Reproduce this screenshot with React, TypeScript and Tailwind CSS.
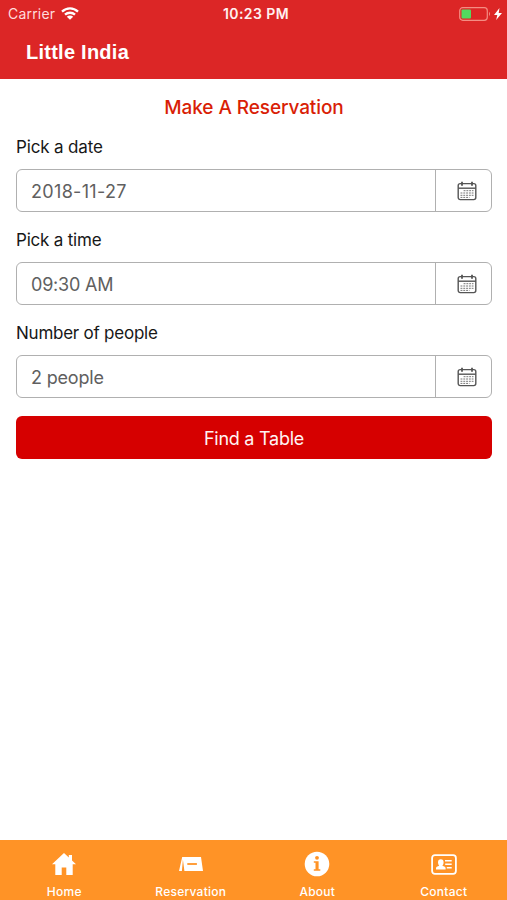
import React from 'react';

function CalendarIcon() {
  return (
    <svg className="h-5 w-5" viewBox="0 0 20 20" fill="none" stroke="#555" strokeWidth="1.4">
      <rect x="1.2" y="2.6" width="17.6" height="16" rx="2" />
      <path d="M1.2 7.2h17.6" strokeWidth="1.4" />
      <path d="M5 0.8v4M15 0.8v4" strokeWidth="1.8" />
      <path d="M6.6 9.7h9.9M3.5 12h13M3.5 14.3h13M3.5 16.4h9" stroke="#777" strokeWidth="1" strokeDasharray="1.9 0.9" />
    </svg>
  );
}

function Field({ label, value, labelTracking, valueTracking }: { label: string; value: string; labelTracking: string; valueTracking: string }) {
  return (
    <div className="mb-[17px]">
      <div className={`mb-[10px] h-[23px] text-[17px] leading-[23px] text-[#171717] ${labelTracking}`}>{label}</div>
      <div className="flex h-[43px] rounded-[6px] border border-[#b0b0b0] bg-white">
        <div className={`flex-1 pl-[14px] text-[18px] leading-[43px] text-[#606060] ${valueTracking}`}>{value}</div>
        <div className="flex w-[56px] items-center justify-center border-l border-[#b0b0b0] pl-[7px]">
          <CalendarIcon />
        </div>
      </div>
    </div>
  );
}

function Tab({ label, children }: { label: string; children: React.ReactNode }) {
  return (
    <div className="flex flex-1 flex-col items-center pt-[10px] text-white">
      <div className="flex h-7 items-center justify-center">{children}</div>
      <div className="mt-[6px] text-[12px] font-medium leading-[16px] tracking-[0.25px]">{label}</div>
    </div>
  );
}

export default function App() {
  return (
    <div className="flex h-[900px] w-[507px] flex-col overflow-hidden bg-white font-['Inter',sans-serif]">
      <header className="h-[79px] shrink-0 bg-[#dc2626] text-white">
        <div className="grid h-[27px] grid-cols-3 items-center pl-[8px] pr-[5px]">
          <div className="flex items-center gap-[6px] text-[14px] tracking-[0.2px] text-[#ffdcdc]">
            <span>Carrier</span>
            <svg width="18" height="13" viewBox="0 0 18 13" fill="none" stroke="white" strokeWidth="2.3">
              <path d="M1 4.6C5.6 .3 12.4 .3 17 4.6M4 7.7c2.8-2.6 7.2-2.6 10 0" />
              <path d="M9 12.8 5.8 9.7c1.9-1.6 4.5-1.6 6.4 0z" fill="white" stroke="none" />
            </svg>
          </div>
          <div className="pl-[2px] text-center text-[14px] font-semibold tracking-[0.4px] text-[#fff0f0]">10:23 PM</div>
          <div className="flex items-center justify-end gap-[3px]">
            <svg width="32" height="14" viewBox="0 0 32 14" fill="none">
              <rect x=".7" y=".7" width="27.6" height="12.6" rx="3" stroke="#f48d83" strokeWidth="1.2" />
              <rect x="2.5" y="2.5" width="9.5" height="9" rx="1" fill="#52d95f" />
              <path d="M30 4.8q2 2.2 0 4.4z" fill="#f48d83" />
            </svg>
            <svg width="8" height="12" viewBox="0 0 8 12" fill="white"><path d="M5.5 0 0 7h3.3L2.2 12 8 4.9H4.7z" /></svg>
          </div>
        </div>
        <h1 className="pl-[26px] pt-[11px] font-['Liberation_Sans',Arial,sans-serif] text-[20px] font-bold leading-[29px] tracking-[0.25px]">Little India</h1>
      </header>
      <main className="flex-1 pl-4 pr-[15px] pt-4">
        <h2 className="mb-4 text-center text-[19px] font-medium leading-[25px] tracking-[-0.1px] text-[#d91e06]">Make A Reservation</h2>
        <Field label="Pick a date" value="2018-11-27" labelTracking="tracking-[-0.15px]" valueTracking="tracking-[0.33px]" />
        <Field label="Pick a time" value="09:30 AM" labelTracking="tracking-[-0.2px]" valueTracking="tracking-[-0.2px]" />
        <Field label="Number of people" value="2 people" labelTracking="tracking-[-0.24px]" valueTracking="tracking-[-0.18px]" />
        <button className="mt-[18px] block h-[43px] w-full rounded-[6px] bg-[#d60000] pt-[2px] text-[18px] tracking-[-0.25px] text-[#fff3f3]">Find a Table</button>
      </main>
      <nav className="flex h-[60px] shrink-0 bg-[#ff9326] pl-[1px]">
        <Tab label="Home">
          <svg width="24" height="22" viewBox="0 0 24 22" fill="white"><path d="M12 0 0 11.3h3.3V22h6.4v-7.4h4.6V22h6.4V11.3H24l-4-3.8V2h-3.2v2.5z" /></svg>
        </Tab>
        <Tab label="Reservation">
          <svg width="24" height="14" viewBox="0 0 24 14" fill="white">
            <path d="M3.2 0H22L24 14H5.4L3.9 2.5 2.9 14H0z" />
            <path d="M8.3 7h9.6" stroke="#ff9326" strokeWidth="1.8" />
          </svg>
        </Tab>
        <Tab label="About">
          <svg width="26" height="26" viewBox="0 0 26 26">
            <circle cx="13" cy="13" r="12.3" fill="white" />
            <circle cx="13" cy="6.8" r="1.9" fill="#ff9326" />
            <path d="M9.8 10.3h4.8v8h1.7v1.5H9.8v-1.5h1.7v-6.5H9.8z" fill="#ff9326" />
          </svg>
        </Tab>
        <Tab label="Contact">
          <svg width="26" height="21" viewBox="0 0 26 21" fill="none">
            <rect x="1.1" y="1.1" width="23.8" height="18.8" rx="2.8" stroke="white" strokeWidth="1.8" />
            <path d="M5 15.5v-1.7q0-1.3 3.2-2.1-1.2-1.2-1.2-3.2 0-3.2 2.8-3.2t2.8 3.2q0 2-1.2 3.2 3.2.8 3.2 2.1v1.7z" fill="white" />
            <path d="M14 6.7h6.7M14.2 10.2h6.5M15.8 13.8h4.9" stroke="white" strokeWidth="1.6" />
          </svg>
        </Tab>
      </nav>
    </div>
  );
}
